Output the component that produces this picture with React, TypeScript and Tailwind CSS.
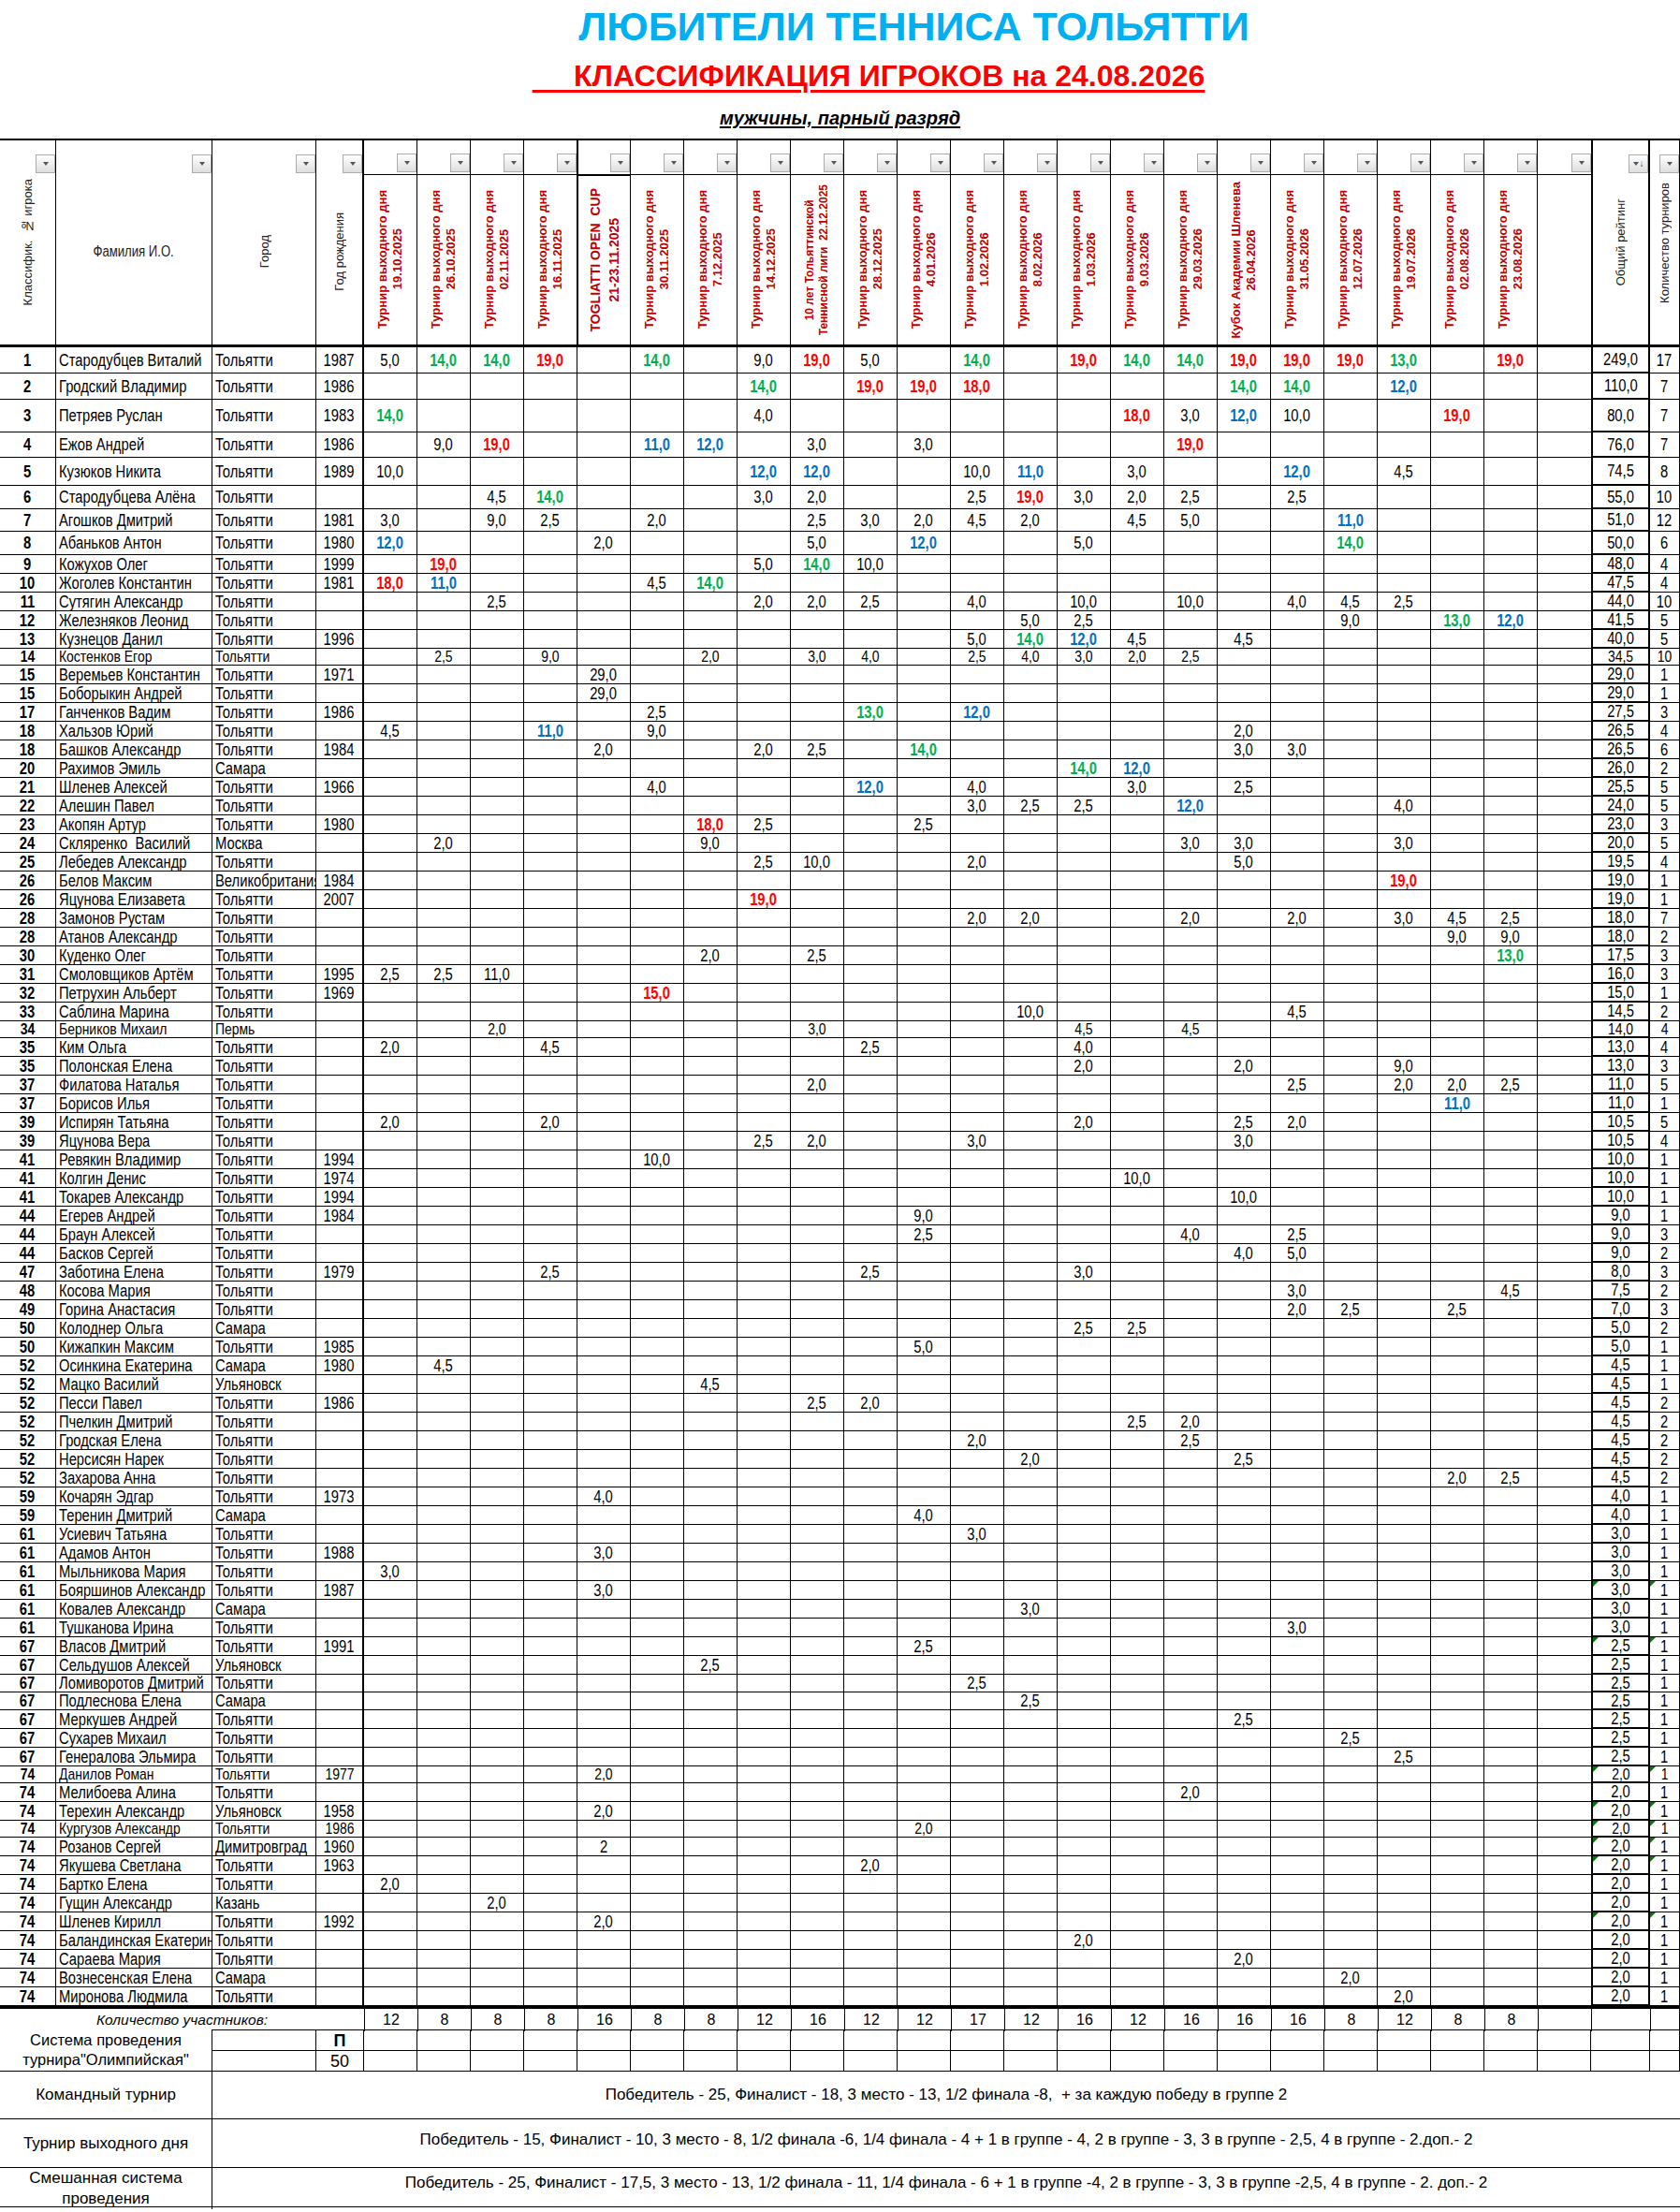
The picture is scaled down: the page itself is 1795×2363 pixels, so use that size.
import React from "react";

const GRID = "grid grid-cols-[60px_167px_111px_51px_repeat(23,57px)_63px_32px]";
const SANS = "[font-family:'Liberation_Sans',Arial,sans-serif]";

const TOURS: [string, string][] = [
  ["Турнир выходного дня", "19.10.2025"],
  ["Турнир выходного дня", "26.10.2025"],
  ["Турнир выходного дня", "02.11.2025"],
  ["Турнир выходного дня", "16.11.2025"],
  ["TOGLIATTI OPEN  CUP", "21-23.11.2025"],
  ["Турнир выходного дня", "30.11.2025"],
  ["Турнир выходного дня", "7.12.2025"],
  ["Турнир выходного дня", "14.12.2025"],
  ["10 лет Тольяттинской", "Теннисной лиги  22.12.2025"],
  ["Турнир выходного дня", "28.12.2025"],
  ["Турнир выходного дня", "4.01.2026"],
  ["Турнир выходного дня", "1.02.2026"],
  ["Турнир выходного дня", "8.02.2026"],
  ["Турнир выходного дня", "1.03.2026"],
  ["Турнир выходного дня", "9.03.2026"],
  ["Турнир выходного дня", "29.03.2026"],
  ["Кубок Академии Шленева", "26.04.2026"],
  ["Турнир выходного дня", "31.05.2026"],
  ["Турнир выходного дня", "12.07.2026"],
  ["Турнир выходного дня", "19.07.2026"],
  ["Турнир выходного дня", "02.08.2026"],
  ["Турнир выходного дня", "23.08.2026"],
  ["", ""],
];

// rank|name|city|year|col:value[color]|total|count|triangle
const DATA = `1|Стародубцев Виталий|Тольятти|1987|1:5,0 2:14,0g 3:14,0g 4:19,0r 6:14,0g 8:9,0 9:19,0r 10:5,0 12:14,0g 14:19,0r 15:14,0g 16:14,0g 17:19,0r 18:19,0r 19:19,0r 20:13,0g 22:19,0r|249,0|17|
2|Гродский Владимир|Тольятти|1986|8:14,0g 10:19,0r 11:19,0r 12:18,0r 17:14,0g 18:14,0g 20:12,0b|110,0|7|
3|Петряев Руслан|Тольятти|1983|1:14,0g 8:4,0 15:18,0r 16:3,0 17:12,0b 18:10,0 21:19,0r|80,0|7|
4|Ежов Андрей|Тольятти|1986|2:9,0 3:19,0r 6:11,0b 7:12,0b 9:3,0 11:3,0 16:19,0r|76,0|7|
5|Кузюков Никита|Тольятти|1989|1:10,0 8:12,0b 9:12,0b 12:10,0 13:11,0b 15:3,0 18:12,0b 20:4,5|74,5|8|
6|Стародубцева Алёна|Тольятти||3:4,5 4:14,0g 8:3,0 9:2,0 12:2,5 13:19,0r 14:3,0 15:2,0 16:2,5 18:2,5|55,0|10|
7|Агошков Дмитрий|Тольятти|1981|1:3,0 3:9,0 4:2,5 6:2,0 9:2,5 10:3,0 11:2,0 12:4,5 13:2,0 15:4,5 16:5,0 19:11,0b|51,0|12|
8|Абаньков Антон|Тольятти|1980|1:12,0b 5:2,0 9:5,0 11:12,0b 14:5,0 19:14,0g|50,0|6|
9|Кожухов Олег|Тольятти|1999|2:19,0r 8:5,0 9:14,0g 10:10,0|48,0|4|
10|Жоголев Константин|Тольятти|1981|1:18,0r 2:11,0b 6:4,5 7:14,0g|47,5|4|
11|Сутягин Александр|Тольятти||3:2,5 8:2,0 9:2,0 10:2,5 12:4,0 14:10,0 16:10,0 18:4,0 19:4,5 20:2,5|44,0|10|
12|Железняков Леонид|Тольятти||13:5,0 14:2,5 19:9,0 21:13,0g 22:12,0b|41,5|5|
13|Кузнецов Данил|Тольятти|1996|12:5,0 13:14,0g 14:12,0b 15:4,5 17:4,5|40,0|5|
14|Костенков Егор|Тольятти||2:2,5 4:9,0 7:2,0 9:3,0 10:4,0 12:2,5 13:4,0 14:3,0 15:2,0 16:2,5|34,5|10|
15|Веремьев Константин|Тольятти|1971|5:29,0|29,0|1|
15|Боборыкин Андрей|Тольятти||5:29,0|29,0|1|
17|Ганченков Вадим|Тольятти|1986|6:2,5 10:13,0g 12:12,0b|27,5|3|
18|Хальзов Юрий|Тольятти||1:4,5 4:11,0b 6:9,0 17:2,0|26,5|4|
18|Башков Александр|Тольятти|1984|5:2,0 8:2,0 9:2,5 11:14,0g 17:3,0 18:3,0|26,5|6|
20|Рахимов Эмиль|Самара||14:14,0g 15:12,0b|26,0|2|
21|Шленев Алексей|Тольятти|1966|6:4,0 10:12,0b 12:4,0 15:3,0 17:2,5|25,5|5|
22|Алешин Павел|Тольятти||12:3,0 13:2,5 14:2,5 16:12,0b 20:4,0|24,0|5|
23|Акопян Артур|Тольятти|1980|7:18,0r 8:2,5 11:2,5|23,0|3|
24|Скляренко  Василий|Москва||2:2,0 7:9,0 16:3,0 17:3,0 20:3,0|20,0|5|
25|Лебедев Александр|Тольятти||8:2,5 9:10,0 12:2,0 17:5,0|19,5|4|
26|Белов Максим|Великобритания|1984|20:19,0r|19,0|1|
26|Яцунова Елизавета|Тольятти|2007|8:19,0r|19,0|1|
28|Замонов Рустам|Тольятти||12:2,0 13:2,0 16:2,0 18:2,0 20:3,0 21:4,5 22:2,5|18,0|7|
28|Атанов Александр|Тольятти||21:9,0 22:9,0|18,0|2|
30|Куденко Олег|Тольятти||7:2,0 9:2,5 22:13,0g|17,5|3|
31|Смоловщиков Артём|Тольятти|1995|1:2,5 2:2,5 3:11,0|16,0|3|
32|Петрухин Альберт|Тольятти|1969|6:15,0r|15,0|1|
33|Саблина Марина|Тольятти||13:10,0 18:4,5|14,5|2|
34|Берников Михаил|Пермь||3:2,0 9:3,0 14:4,5 16:4,5|14,0|4|
35|Ким Ольга|Тольятти||1:2,0 4:4,5 10:2,5 14:4,0|13,0|4|
35|Полонская Елена|Тольятти||14:2,0 17:2,0 20:9,0|13,0|3|
37|Филатова Наталья|Тольятти||9:2,0 18:2,5 20:2,0 21:2,0 22:2,5|11,0|5|
37|Борисов Илья|Тольятти||21:11,0b|11,0|1|
39|Испирян Татьяна|Тольятти||1:2,0 4:2,0 14:2,0 17:2,5 18:2,0|10,5|5|
39|Яцунова Вера|Тольятти||8:2,5 9:2,0 12:3,0 17:3,0|10,5|4|
41|Ревякин Владимир|Тольятти|1994|6:10,0|10,0|1|
41|Колгин Денис|Тольятти|1974|15:10,0|10,0|1|
41|Токарев Александр|Тольятти|1994|17:10,0|10,0|1|
44|Егерев Андрей|Тольятти|1984|11:9,0|9,0|1|
44|Браун Алексей|Тольятти||11:2,5 16:4,0 18:2,5|9,0|3|
44|Басков Сергей|Тольятти||17:4,0 18:5,0|9,0|2|
47|Заботина Елена|Тольятти|1979|4:2,5 10:2,5 14:3,0|8,0|3|
48|Косова Мария|Тольятти||18:3,0 22:4,5|7,5|2|
49|Горина Анастасия|Тольятти||18:2,0 19:2,5 21:2,5|7,0|3|
50|Колоднер Ольга|Самара||14:2,5 15:2,5|5,0|2|
50|Кижапкин Максим|Тольятти|1985|11:5,0|5,0|1|
52|Осинкина Екатерина|Самара|1980|2:4,5|4,5|1|
52|Мацко Василий|Ульяновск||7:4,5|4,5|1|
52|Песси Павел|Тольятти|1986|9:2,5 10:2,0|4,5|2|
52|Пчелкин Дмитрий|Тольятти||15:2,5 16:2,0|4,5|2|
52|Гродская Елена|Тольятти||12:2,0 16:2,5|4,5|2|
52|Нерсисян Нарек|Тольятти||13:2,0 17:2,5|4,5|2|
52|Захарова Анна|Тольятти||21:2,0 22:2,5|4,5|2|
59|Кочарян Эдгар|Тольятти|1973|5:4,0|4,0|1|
59|Теренин Дмитрий|Самара||11:4,0|4,0|1|
61|Усиевич Татьяна|Тольятти||12:3,0|3,0|1|
61|Адамов Антон|Тольятти|1988|5:3,0|3,0|1|
61|Мыльникова Мария|Тольятти||1:3,0|3,0|1|
61|Бояршинов Александр|Тольятти|1987|5:3,0|3,0|1|t
61|Ковалев Александр|Самара||13:3,0|3,0|1|
61|Тушканова Ирина|Тольятти||18:3,0|3,0|1|
67|Власов Дмитрий|Тольятти|1991|11:2,5|2,5|1|t
67|Сельдушов Алексей|Ульяновск||7:2,5|2,5|1|
67|Ломиворотов Дмитрий|Тольятти||12:2,5|2,5|1|
67|Подлеснова Елена|Самара||13:2,5|2,5|1|
67|Меркушев Андрей|Тольятти||17:2,5|2,5|1|
67|Сухарев Михаил|Тольятти||19:2,5|2,5|1|
67|Генералова Эльмира|Тольятти||20:2,5|2,5|1|
74|Данилов Роман|Тольятти|1977|5:2,0|2,0|1|t
74|Мелибоева Алина|Тольятти||16:2,0|2,0|1|
74|Терехин Александр|Ульяновск|1958|5:2,0|2,0|1|t
74|Кургузов Александр|Тольятти|1986|11:2,0|2,0|1|t
74|Розанов Сергей|Димитровград|1960|5:2|2,0|1|t
74|Якушева Светлана|Тольятти|1963|10:2,0|2,0|1|t
74|Бартко Елена|Тольятти||1:2,0|2,0|1|
74|Гущин Александр|Казань||3:2,0|2,0|1|
74|Шленев Кирилл|Тольятти|1992|5:2,0|2,0|1|t
74|Баландинская Екатерина|Тольятти||14:2,0|2,0|1|
74|Сараева Мария|Тольятти||17:2,0|2,0|1|
74|Вознесенская Елена|Самара||19:2,0|2,0|1|
74|Миронова Людмила|Тольятти||20:2,0|2,0|1|`;

// rows of the sheet are not all the same height
const ROW_H: Record<number, string> = {
  0: "h-[28px] text-[18px]",
  1: "h-[28px] text-[18px]",
  2: "h-[35px] text-[18px]",
  3: "h-[27px] text-[18px]",
  4: "h-[30px] text-[18px]",
  5: "h-[25px] text-[18px]",
  6: "h-[24px] text-[18px]",
  7: "h-[25px] text-[18px]",
  13: "h-[18px] text-[17px]",
  33: "h-[18px] text-[17px]",
  68: "h-[19px] text-[18px]",
  69: "h-[19px] text-[18px]",
  73: "h-[18px] text-[17px]",
  76: "h-[18px] text-[17px]",
};

const COLORS: Record<string, string> = {
  g: "text-[#00B050] font-bold",
  r: "text-[#FF0000] font-bold",
  b: "text-[#0070C0] font-bold",
};

const COUNTS = ["12", "8", "8", "8", "16", "8", "8", "12", "16", "12", "12", "17", "12", "16", "12", "16", "16", "16", "8", "12", "8", "8", ""];

type Player = {
  rank: string;
  name: string;
  city: string;
  year: string;
  vals: Record<number, { t: string; c: string }>;
  total: string;
  count: string;
  tri: boolean;
};

const players: Player[] = DATA.split("\n").map((line) => {
  const [rank, name, city, year, v, total, count, tri] = line.split("|");
  const vals: Record<number, { t: string; c: string }> = {};
  v.split(" ")
    .filter(Boolean)
    .forEach((p) => {
      const [k, raw] = p.split(":");
      const last = raw[raw.length - 1];
      if (last === "g" || last === "r" || last === "b") vals[+k] = { t: raw.slice(0, -1), c: last };
      else vals[+k] = { t: raw, c: "" };
    });
  return { rank, name, city, year, vals, total, count, tri: tri === "t" };
});

// the sheet is set in a narrow face: squeeze the regular one
const Narrow = ({ children, left }: { children: React.ReactNode; left?: boolean }) => (
  <span className={`inline-block whitespace-pre scale-x-[0.82] ${left ? "origin-left" : "origin-center"}`}>{children}</span>
);

const FilterBtn = ({ sort }: { sort?: boolean }) => (
  <div className="w-[21px] h-[20px] border border-[#acacac] bg-linear-to-b from-white to-[#dedede] flex items-center justify-center gap-[1px]">
    <span className="w-0 h-0 border-x-[3px] border-x-transparent border-t-[4px] border-t-[#555]" />
    {sort && <span className="text-[10px] leading-none text-[#444]">↓</span>}
  </div>
);

const Tri = () => (
  <span className="absolute left-0 top-0 w-[6px] h-[6px] bg-[#007a00] [clip-path:polygon(0_0,100%_0,0_100%)]" />
);

const RotText = ({ children, cls }: { children: React.ReactNode; cls: string }) => (
  <div className={`[writing-mode:vertical-rl] rotate-180 text-center whitespace-pre ${cls}`}>{children}</div>
);

const TableHeader = () => (
  <div className={`${GRID} h-[223px] border-t-2 border-b-[3px] border-black`}>
    <div className="relative border-r border-black flex items-center justify-center">
      <div className="absolute top-[15px] right-0"><FilterBtn /></div>
      <RotText cls="text-[13px] leading-none text-[#222]">Классифик.  № игрока</RotText>
    </div>
    <div className="relative border-r border-black flex items-center justify-center">
      <div className="absolute top-[15px] right-0"><FilterBtn /></div>
      <span className="text-[16px] text-[#222] mt-[20px]">
        <Narrow>Фамилия И.О.</Narrow>
      </span>
    </div>
    <div className="relative border-r border-black flex items-center justify-center">
      <div className="absolute top-[15px] right-0"><FilterBtn /></div>
      <RotText cls="text-[13px] leading-none text-[#222] mt-[20px]">Город</RotText>
    </div>
    <div className="relative border-r-2 border-black flex items-center justify-center">
      <div className="absolute top-[15px] right-0"><FilterBtn /></div>
      <RotText cls="text-[13px] leading-none text-[#222] mt-[20px]">Год рождения</RotText>
    </div>
    {TOURS.map(([a, b], i) => {
      const open = i === 4;
      const small = i === 8;
      return (
        <div key={i} className={`flex flex-col ${i < 22 ? "border-r border-black" : ""} ${open ? "border-l" : ""}`}>
          <div className="h-[36px] flex items-end justify-end pb-[2px]">
            <FilterBtn />
          </div>
          <div className={`flex-1 ${open ? "border-t-2" : "border-t"} border-black flex items-center justify-center`}>
            {a && (
              <RotText
                cls={
                  open
                    ? "text-[14px] leading-[20px] font-extrabold text-[#C00000]"
                    : small
                    ? "text-[12px] leading-[15px] font-bold text-[#C00000]"
                    : "text-[13px] leading-[16px] font-bold text-[#C00000]"
                }
              >
                {a}
                <br />
                {b}
              </RotText>
            )}
          </div>
        </div>
      );
    })}
    <div className="relative border-x-2 border-black flex items-center justify-center">
      <div className="absolute top-[15px] right-0"><FilterBtn sort /></div>
      <RotText cls="text-[13px] leading-none text-[#222]">Общий рейтинг</RotText>
    </div>
    <div className="relative border-r border-black flex items-center justify-center">
      <div className="absolute top-[15px] right-0"><FilterBtn /></div>
      <RotText cls="text-[13px] leading-none text-[#222]">Количество турниров</RotText>
    </div>
  </div>
);

const PlayerRow = ({ p, idx }: { p: Player; idx: number }) => {
  const h = ROW_H[idx] ?? "h-[20px] text-[18px]";
  const cell = "border-b border-black flex items-center overflow-hidden whitespace-nowrap";
  return (
    <div className={`${GRID} ${h} leading-none`}>
      <div className={`${cell} border-r border-black justify-center font-bold`}>
        <Narrow>{p.rank}</Narrow>
      </div>
      <div className={`${cell} border-r border-black pl-[3px]`}>
        <Narrow left>{p.name}</Narrow>
      </div>
      <div className={`${cell} border-r border-black pl-[3px]`}>
        <Narrow left>{p.city}</Narrow>
      </div>
      <div className={`${cell} border-r-2 border-black justify-center`}>
        <Narrow>{p.year}</Narrow>
      </div>
      {TOURS.map((_, i) => {
        const v = p.vals[i + 1];
        return (
          <div key={i} className={`${cell} ${i < 22 ? "border-r border-black" : ""} justify-center ${v && v.c ? COLORS[v.c] : ""}`}>
            {v && <Narrow>{v.t}</Narrow>}
          </div>
        );
      })}
      <div className={`${cell} relative border-x-2 border-b-2 border-black justify-center`}>
        {p.tri && <Tri />}
        <Narrow>{p.total}</Narrow>
      </div>
      <div className={`${cell} relative border-r border-black justify-center`}>
        {p.tri && <Tri />}
        <Narrow>{p.count}</Narrow>
      </div>
    </div>
  );
};

const Footer = () => (
  <div>
    <div className={`${GRID} h-[25px] border-t-[3px] border-black text-[16px]`}>
      <div className="col-span-4 flex items-center justify-center italic text-[15.5px]">Количество участников:</div>
      {COUNTS.map((c, i) => (
        <div key={i} className="border-l border-black flex items-center justify-center">{c}</div>
      ))}
      <div className="border-l border-black" />
      <div className="border-x border-black" />
    </div>
    <div className={`${GRID} grid-rows-[22px_22px] text-[16.5px]`}>
      <div className="col-span-2 row-span-2 border-r border-black flex flex-col items-center justify-center leading-[21px]">
        <span>Система проведения</span>
        <span>турнира"Олимпийская"</span>
      </div>
      {[0, 1].map((r) =>
        Array.from({ length: 27 }).map((_, i) => (
          <div key={`${r}-${i}`} className="border-t border-r border-black flex items-center justify-center text-[18px] leading-none">
            {i === 1 ? (r === 0 ? <b>П</b> : "50") : ""}
          </div>
        ))
      )}
    </div>
    <div className="grid grid-cols-[227px_1fr] h-[51px] border-t border-black">
      <div className="border-r border-black flex items-center justify-center text-[17px]">Командный турнир</div>
      <div className="flex items-center justify-center text-[17px] whitespace-pre">
        Победитель - 25, Финалист - 18, 3 место - 13, 1/2 финала -8,  + за каждую победу в группе 2
      </div>
    </div>
    <div className="grid grid-cols-[227px_1fr] h-[52px] border-t border-black">
      <div className="border-r border-black flex items-center justify-center text-[17px]">Турнир выходного дня</div>
      <div className="flex items-start justify-center pt-[9px] text-[17px] whitespace-pre">
        Победитель - 15, Финалист - 10, 3 место - 8, 1/2 финала -6, 1/4 финала - 4 + 1 в группе - 4, 2 в группе - 3, 3 в группе - 2,5, 4 в группе - 2.доп.- 2
      </div>
    </div>
    <div className="grid grid-cols-[227px_1fr] h-[43px] border-y border-black">
      <div className="border-r border-black flex flex-col items-center justify-center text-[17px] leading-[22px]">
        <span>Смешанная система</span>
        <span>проведения</span>
      </div>
      <div className="flex items-start justify-center pt-[3px] text-[17px] whitespace-pre">
        Победитель - 25, Финалист - 17,5, 3 место - 13, 1/2 финала - 11, 1/4 финала - 6 + 1 в группе -4, 2 в группе - 3, 3 в группе -2,5, 4 в группе - 2. доп.- 2
      </div>
    </div>
    <div className="h-[5px]" />
  </div>
);

export default function App() {
  return (
    <div className={`w-[1795px] bg-white text-black ${SANS}`}>
      <div className="h-[148px] flex flex-col">
        <div className="pt-[7px] pl-[158px] flex justify-center">
          <h1 className="text-[43px] leading-none font-bold text-[#00B0F0]">ЛЮБИТЕЛИ ТЕННИСА ТОЛЬЯТТИ</h1>
        </div>
        <div className="mt-[15px] pl-[61px] flex justify-center">
          <h2 className="text-[32px] leading-none font-bold text-[#FF0000] underline decoration-[3px] underline-offset-[4px] whitespace-pre">
            {"     КЛАССИФИКАЦИЯ ИГРОКОВ на 24.08.2026"}
          </h2>
        </div>
        <div className="mt-[19px] flex justify-center">
          <p className="text-[20px] leading-none font-bold italic underline underline-offset-[2px]">мужчины, парный разряд</p>
        </div>
      </div>
      <TableHeader />
      {players.map((p, i) => (
        <PlayerRow key={i} p={p} idx={i} />
      ))}
      <Footer />
    </div>
  );
}
